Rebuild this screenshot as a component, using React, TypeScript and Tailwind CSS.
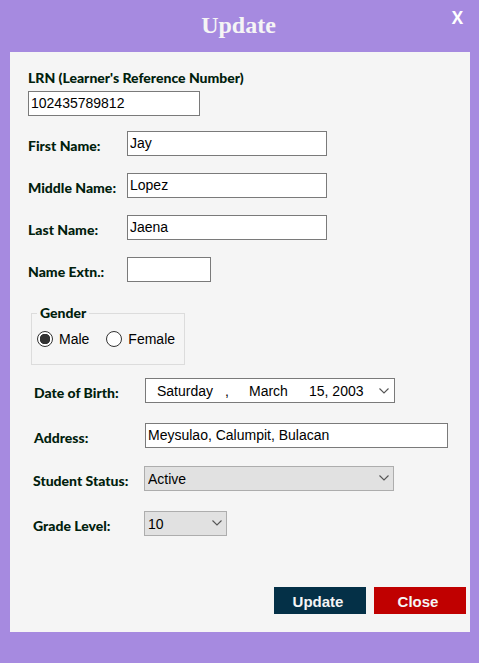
import { ReactNode } from "react";

const inputClass =
  "block h-[25px] max-w-full border border-[#7a7a7a] bg-white pl-[2px] pb-[2px] text-[14px] leading-5 text-black outline-none";

const labelClass =
  "shrink-0 font-['Lato',sans-serif] text-[14px] leading-5 font-black text-[#00200c]";

function Chevron() {
  return (
    <svg
      className="pointer-events-none absolute top-2 right-[5px] h-2 w-[10px]"
      viewBox="0 0 10 8"
      fill="none"
      stroke="#555555"
      strokeWidth="1.1"
      aria-hidden="true"
    >
      <path d="M0.5 1.5 L5 6 L9.5 1.5" />
    </svg>
  );
}

function Row({
  id,
  label,
  labelWidth,
  children,
}: {
  id: string;
  label: string;
  labelWidth: string;
  children: ReactNode;
}) {
  return (
    <div className="flex items-end">
      <label htmlFor={id} className={`${labelClass} ${labelWidth}`}>
        {label}
      </label>
      {children}
    </div>
  );
}

function Picker({ id, width, options }: { id: string; width: string; options: string[] }) {
  return (
    <div className={`relative max-w-full ${width}`}>
      <select
        id={id}
        className="block h-[25px] w-full appearance-none border border-[#adadad] bg-[#e1e1e1] pl-[3px] text-[14px] leading-5 text-black outline-none"
      >
        {options.map((option) => (
          <option key={option}>{option}</option>
        ))}
      </select>
      <Chevron />
    </div>
  );
}

function GenderOption({ label, checked }: { label: string; checked?: boolean }) {
  return (
    <label className="flex items-center gap-[6px] text-[14px] leading-5 text-black">
      <input
        type="radio"
        name="gender"
        defaultChecked={checked}
        className="h-4 w-4 appearance-none rounded-full border border-[#333333] bg-white checked:bg-[radial-gradient(circle,#333333_5px,#ffffff_5.5px)]"
      />
      {label}
    </label>
  );
}

export default function App() {
  return (
    <main className="flex min-h-screen flex-col bg-[#a68ae0] pr-[9px] pb-[31px] pl-[10px] font-['Liberation_Sans',Arial,sans-serif]">
      <header className="grid h-[52px] grid-cols-[1fr_auto_1fr]">
        <h1 className="col-start-2 pt-[9px] pr-[3px] font-['Liberation_Serif',serif] text-[24px] leading-8 font-bold text-[#f5f5f5]">
          Update
        </h1>
        <button
          type="button"
          aria-label="Close window"
          className="mt-2 mr-[7px] h-5 justify-self-end font-['Open_Sans',sans-serif] text-[17px] leading-5 font-bold text-white"
        >
          X
        </button>
      </header>

      <form
        className="flex grow flex-col bg-[#f5f5f5] pr-1 pb-[18px] pl-[18px]"
        onSubmit={(event) => event.preventDefault()}
      >
        <div className="flex flex-col pt-4">
          <label htmlFor="lrn" className={labelClass}>
            LRN (Learner's Reference Number)
          </label>
          <input id="lrn" defaultValue="102435789812" className={`${inputClass} mt-[3px] w-[172px]`} />
        </div>

        <div className="mt-[15px] flex flex-col gap-[17px]">
          <Row id="first" label="First Name:" labelWidth="w-[99px]">
            <input id="first" defaultValue="Jay" className={`${inputClass} w-[200px]`} />
          </Row>
          <Row id="middle" label="Middle Name:" labelWidth="w-[99px]">
            <input id="middle" defaultValue="Lopez" className={`${inputClass} w-[200px]`} />
          </Row>
          <Row id="last" label="Last Name:" labelWidth="w-[99px]">
            <input id="last" defaultValue="Jaena" className={`${inputClass} w-[200px]`} />
          </Row>
          <Row id="extension" label="Name Extn.:" labelWidth="w-[99px]">
            <input id="extension" className={`${inputClass} w-[84px]`} />
          </Row>
        </div>

        <fieldset className="mt-[21px] ml-[3px] h-[62px] w-[154px] border border-[#dcdcdc] pl-[5px]">
          <legend className={`${labelClass} px-[3px]`}>Gender</legend>
          <div className="flex gap-[17px] pt-[6px]">
            <GenderOption label="Male" checked />
            <GenderOption label="Female" />
          </div>
        </fieldset>

        <div className="mt-[13px] ml-[6px] flex flex-col gap-5">
          <Row id="birth" label="Date of Birth:" labelWidth="w-[111px]">
            <button
              id="birth"
              type="button"
              aria-haspopup="dialog"
              className="relative flex h-[25px] w-[250px] max-w-full items-center border border-[#7a7a7a] bg-white pl-[11px] text-[14px] leading-5 text-black"
            >
              <span className="w-[68px] text-left">Saturday</span>
              <span className="w-6 text-left">,</span>
              <span className="w-[60px] text-left">March</span>
              <span>15, 2003</span>
              <Chevron />
            </button>
          </Row>
          <Row id="address" label="Address:" labelWidth="w-[111px]">
            <input
              id="address"
              defaultValue="Meysulao, Calumpit, Bulacan"
              className={`${inputClass} w-[303px]`}
            />
          </Row>
        </div>

        <div className="mt-[18px] ml-[5px] flex flex-col gap-5">
          <Row id="status" label="Student Status:" labelWidth="w-[111px]">
            <Picker id="status" width="w-[250px]" options={["Active", "Inactive"]} />
          </Row>
          <Row id="grade" label="Grade Level:" labelWidth="w-[111px]">
            <Picker id="grade" width="w-[83px]" options={["10", "9", "8", "7"]} />
          </Row>
        </div>

        <div className="mt-auto flex justify-end gap-2 text-[15px] leading-5 font-bold text-[#f5f5f5]">
          <button type="submit" className="h-[27px] w-[92px] bg-[#043047] pt-[3px] pr-1">
            Update
          </button>
          <button type="button" className="h-[27px] w-[92px] bg-[#c00000] pt-[3px] pr-1">
            Close
          </button>
        </div>
      </form>
    </main>
  );
}
